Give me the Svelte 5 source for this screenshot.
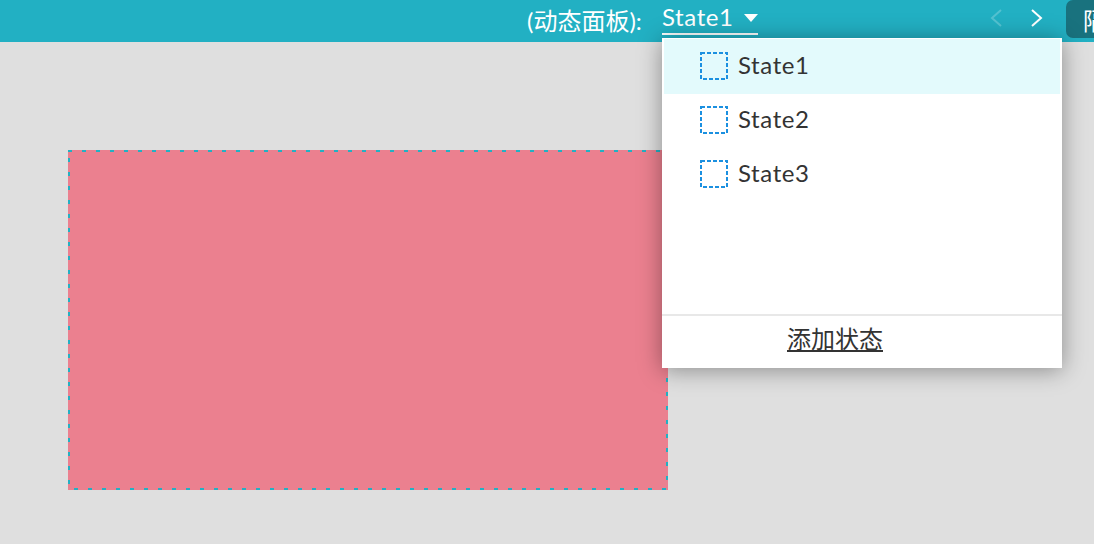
<script>
	const states = ['State1', 'State2', 'State3'];
	let active = $state('State1');
</script>

<div class="page">
	<header class="toolbar">
		<span class="panel-label">(动态面板):</span>
		<div class="state-picker">
			<div class="state-current">
				<span>{active}</span>
				<i class="caret"></i>
			</div>
			<div class="state-menu">
				<ul>
					{#each states as s}
						<li class:active={s === active}>
							<button onclick={() => (active = s)}>
								<svg class="state-icon" width="28" height="28" viewBox="0 0 28 28">
									<rect x="1" y="1" width="26" height="26" />
								</svg>
								<span>{s}</span>
							</button>
						</li>
					{/each}
				</ul>
				<div class="menu-footer"><a href="#add">添加状态</a></div>
			</div>
		</div>
		<div class="pager">
			<svg class="off" width="13" height="18" viewBox="0 0 13 18"><path d="M11 1 2 9l9 8" /></svg>
			<svg width="13" height="18" viewBox="0 0 13 18"><path d="M2 1l9 8-9 8" /></svg>
		</div>
		<button class="isolate">隔</button>
	</header>
	<main class="canvas">
		<div class="panel"></div>
	</main>
</div>

<style>
	:global(body) {
		margin: 0;
		overflow: hidden;
	}

	.page {
		width: 1094px;
		height: 544px;
		display: flex;
		flex-direction: column;
		overflow: hidden;
		background: #dfdfdf;
		font-family: Lato, 'Noto Sans CJK SC', sans-serif;
	}

	.toolbar {
		height: 42px;
		flex: none;
		display: flex;
		align-items: flex-start;
		background: #22b0c3;
		color: #fff;
		padding-left: 527px;
		box-sizing: border-box;
		white-space: nowrap;
		position: relative;
		z-index: 1;
	}

	.panel-label {
		width: 135px;
		flex: none;
		font-size: 24px;
		line-height: 42px;
	}

	.state-picker {
		position: relative;
		width: 96px;
		flex: none;
	}

	.state-current {
		height: 35px;
		box-sizing: border-box;
		border-bottom: 2px solid #fff;
		display: flex;
		align-items: center;
		justify-content: space-between;
		font-size: 24px;
		letter-spacing: 0.6px;
		line-height: 35px;
	}

	.caret {
		width: 0;
		height: 0;
		margin-top: 3px;
		border-left: 7px solid transparent;
		border-right: 7px solid transparent;
		border-top: 8px solid #fff;
	}

	.state-menu {
		position: absolute;
		left: 0;
		top: 38px;
		width: 400px;
		height: 330px;
		background: #fff;
		color: #333;
		box-shadow: 0 2px 22px rgba(0, 0, 0, 0.38);
		display: flex;
		flex-direction: column;
	}

	ul {
		list-style: none;
		margin: 0;
		padding: 1px 2px 0;
		flex: 1;
	}

	li {
		height: 54px;
	}

	li.active {
		height: 55px;
		margin-bottom: -1px;
		background: #e3fafc;
	}

	li button {
		width: 100%;
		height: 54px;
		display: flex;
		align-items: center;
		gap: 10px;
		padding: 0 0 0 36px;
		border: 0;
		background: none;
		font: inherit;
		font-size: 24px;
		letter-spacing: 0.6px;
		color: #333;
		text-align: left;
	}

	li button span {
		margin-bottom: 4px;
	}

	.state-icon {
		flex: none;
	}

	.state-icon rect {
		fill: none;
		stroke: #1b90e0;
		stroke-width: 2;
		stroke-dasharray: 4 2;
	}

	.menu-footer {
		height: 54px;
		flex: none;
		box-sizing: border-box;
		border-top: 2px solid #e8e8e8;
		display: flex;
		align-items: center;
		justify-content: center;
		padding: 0 54px 6px 0;
		font-size: 24px;
		line-height: 1;
	}

	.menu-footer a {
		color: #333;
		text-decoration: underline;
	}

	.pager {
		margin-left: 232px;
		flex: none;
		height: 36px;
		display: flex;
		align-items: center;
		gap: 27px;
	}

	.pager path {
		fill: none;
		stroke: #fff;
		stroke-width: 2;
	}

	.pager .off {
		opacity: 0.22;
	}

	.isolate {
		flex: none;
		margin-left: 23px;
		width: 60px;
		height: 38px;
		padding: 0 0 0 17px;
		border: 0;
		border-bottom-left-radius: 7px;
		border-top-left-radius: 7px;
		background: #19727e;
		color: #fff;
		font: inherit;
		font-size: 24px;
		text-align: left;
	}

	.canvas {
		flex: 1;
		position: relative;
	}

	.panel {
		position: absolute;
		left: 68px;
		top: 108px;
		width: 600px;
		height: 340px;
		background:
			linear-gradient(90deg, #22b0c3 4px, transparent 4px) 0 0 / 14px 2px repeat-x,
			linear-gradient(90deg, #22b0c3 4px, transparent 4px) 6px 100% / 14px 2px repeat-x,
			linear-gradient(#22b0c3 4px, transparent 4px) 0 8px / 2px 14px repeat-y,
			linear-gradient(#22b0c3 4px, transparent 4px) 100% 4px / 2px 14px repeat-y,
			#eb808f;
	}
</style>
